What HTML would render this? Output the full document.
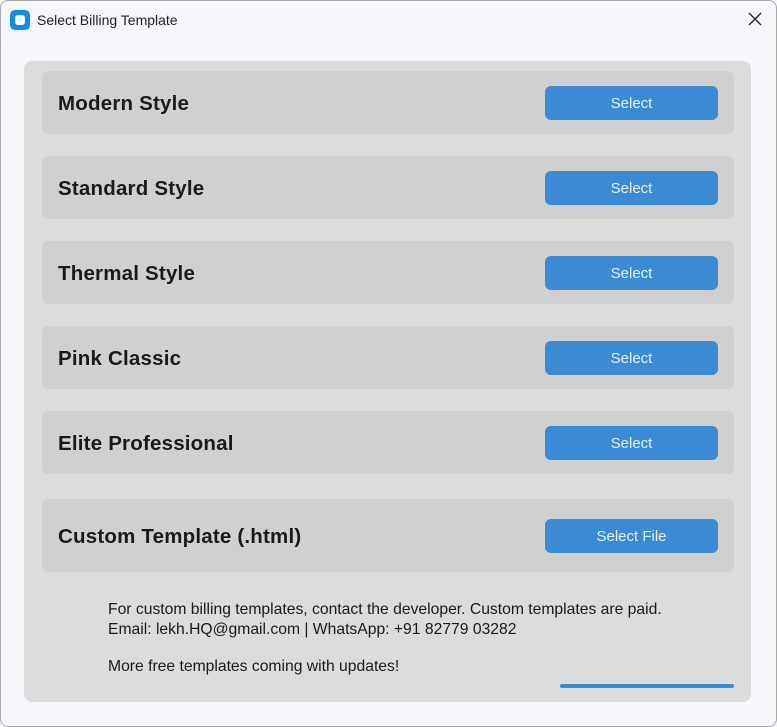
<!DOCTYPE html><html><head><style>
body{margin:0;width:777px;height:727px;background:#f6f7fb;font-family:"Liberation Sans",sans-serif;position:relative;overflow:hidden}
.win{position:absolute;left:0;top:0;width:775px;height:725px;border:1px solid #a9a9a9;border-radius:8px}
.ic{position:absolute;left:10px;top:10px;width:20px;height:20px;background:#0a8ef0;border-radius:5px}
.ic:after{content:"";position:absolute;left:5px;top:5px;width:10px;height:10px;background:#fff;border-radius:3px}
.t{position:absolute;left:37px;top:12px;font-size:14px;color:#222}
.x{position:absolute;left:748px;top:12px}
.panel{position:absolute;left:24px;top:61px;width:727px;height:641px;background:#dcdcdc;border-radius:8px}
.row{position:absolute;left:42px;width:692px;height:63px;background:#d0d0d0;border-radius:6px}
.row span{position:absolute;left:16px;top:50%;transform:translateY(-45%);font-size:20.5px;font-weight:bold;color:#1a1a1a;letter-spacing:.2px}
.row b{position:absolute;left:503px;top:15px;width:173px;height:34px;background:#3a8bd4;border-radius:6px;color:#e8f0fa;font-weight:normal;font-size:15px;text-align:center;line-height:35px}
.f{position:absolute;left:108px;font-size:15.7px;color:#1a1a1a}
</style></head><body><div class="win"></div>
<div class="ic"></div><div class="t">Select Billing Template</div>
<svg class="x" width="14" height="14"><path d="M1 1L13 13M13 1L1 13" stroke="#222" stroke-width="1.3"/></svg>
<div class="panel"></div>
<div class="row" style="top:71px"><span>Modern Style</span><b>Select</b></div>
<div class="row" style="top:156px"><span>Standard Style</span><b>Select</b></div>
<div class="row" style="top:241px"><span>Thermal Style</span><b>Select</b></div>
<div class="row" style="top:326px"><span>Pink Classic</span><b>Select</b></div>
<div class="row" style="top:411px"><span>Elite Professional</span><b>Select</b></div>
<div class="row" style="top:499px;height:73px"><span>Custom Template (.html)</span><b style="top:20px">Select File</b></div>
<div class="f" style="top:601px">For custom billing templates, contact the developer. Custom templates are paid.</div>
<div class="f" style="top:621px">Email: lekh.HQ@gmail.com | WhatsApp: +91 82779 03282</div>
<div class="f" style="top:658px">More free templates coming with updates!</div>
<div style="position:absolute;left:560px;top:684px;width:174px;height:4px;background:#3a8bd4;border-radius:2px"></div>
</body></html>
